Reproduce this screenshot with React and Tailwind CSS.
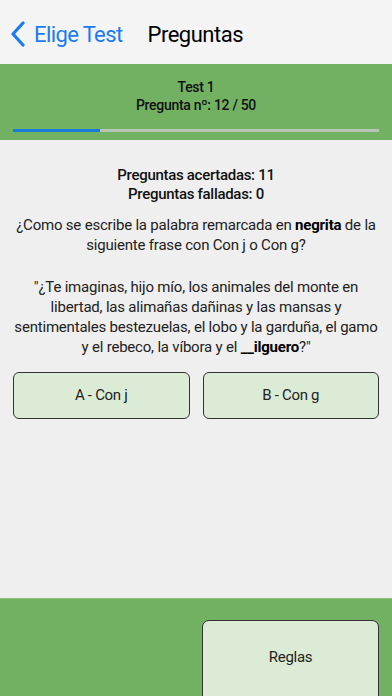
export default function App() {
  return (
    <div
      className="w-[392px] h-[696px] flex flex-col bg-[#efefef] text-black overflow-hidden"
      style={{ fontFamily: 'Roboto, "Liberation Sans", Arial, sans-serif' }}
    >
      {/* Nav bar */}
      <div className="h-16 shrink-0 flex items-center bg-[#f4f4f4] pt-1">
        <div className="flex items-center pl-[10px] text-[#1a7cf0]">
          <svg width="16" height="26" viewBox="0 0 16 26" fill="none">
            <path d="M13 2 L3 13 L13 24" stroke="currentColor" strokeWidth="3.2" strokeLinecap="round" strokeLinejoin="round" />
          </svg>
          <span className="ml-[8px] text-[22px] tracking-[-0.6px]">Elige Test</span>
        </div>
        <span className="ml-[25px] text-[22px] tracking-[-0.5px]">Preguntas</span>
      </div>

      {/* Green header */}
      <div className="h-[76px] shrink-0 bg-[#72b062] flex flex-col items-center pt-[14px]">
        <p className="text-[14px] leading-[18px] font-medium tracking-[-0.3px] text-[#111]">Test 1</p>
        <p className="text-[14px] leading-[18px] font-medium tracking-[-0.3px] text-[#111]">Pregunta nº: 12 / 50</p>
        <div className="mt-[15px] w-[366px] h-[3px] bg-[#b8c4b4] flex">
          <div className="w-[87px] h-full bg-[#1a7ad8]" />
        </div>
      </div>

      {/* Content */}
      <div className="flex-1 flex flex-col items-center px-[13px] text-center">
        <div className="mt-[26px] text-[15px] leading-[19px] font-medium tracking-[-0.3px] text-[#111]">
          <p>Preguntas acertadas: 11</p>
          <p>Preguntas falladas: 0</p>
        </div>
        <p className="mt-[11px] w-[372px] text-[15px] leading-[20px] tracking-[-0.2px] text-[#222]">
          ¿Como se escribe la palabra remarcada en <b className="font-bold text-black">negrita</b> de la siguiente frase con Con j o Con g?
        </p>
        <p className="mt-[22px] w-[364px] text-[15px] leading-[20px] tracking-[-0.2px] text-[#222]">
          "¿Te imaginas, hijo mío, los animales del monte en libertad, las alimañas dañinas y las mansas y sentimentales bestezuelas, el lobo y la garduña, el gamo y el rebeco, la víbora y el <b className="font-bold text-black">__ilguero</b>?"
        </p>
        <div className="mt-[15px] w-full grid grid-cols-2 gap-[13px]">
          <button className="h-[47px] rounded-[6px] border border-[#333] bg-[#dcebd6] text-[15px] tracking-[-0.3px] text-[#222]">
            A - Con j
          </button>
          <button className="h-[47px] rounded-[6px] border border-[#333] bg-[#dcebd6] text-[15px] tracking-[-0.3px] text-[#222]">
            B - Con g
          </button>
        </div>
      </div>

      {/* Footer */}
      <div className="h-[98px] shrink-0 bg-[#72b062] border-t border-[#8cc07c] flex justify-end pt-[21px] pr-[13px]">
        <button className="w-[177px] h-[90px] rounded-[7px] border border-[#333] bg-[#dcebd6] text-[15px] tracking-[-0.3px] text-[#222] pb-[16px]">
          Reglas
        </button>
      </div>
    </div>
  );
}
